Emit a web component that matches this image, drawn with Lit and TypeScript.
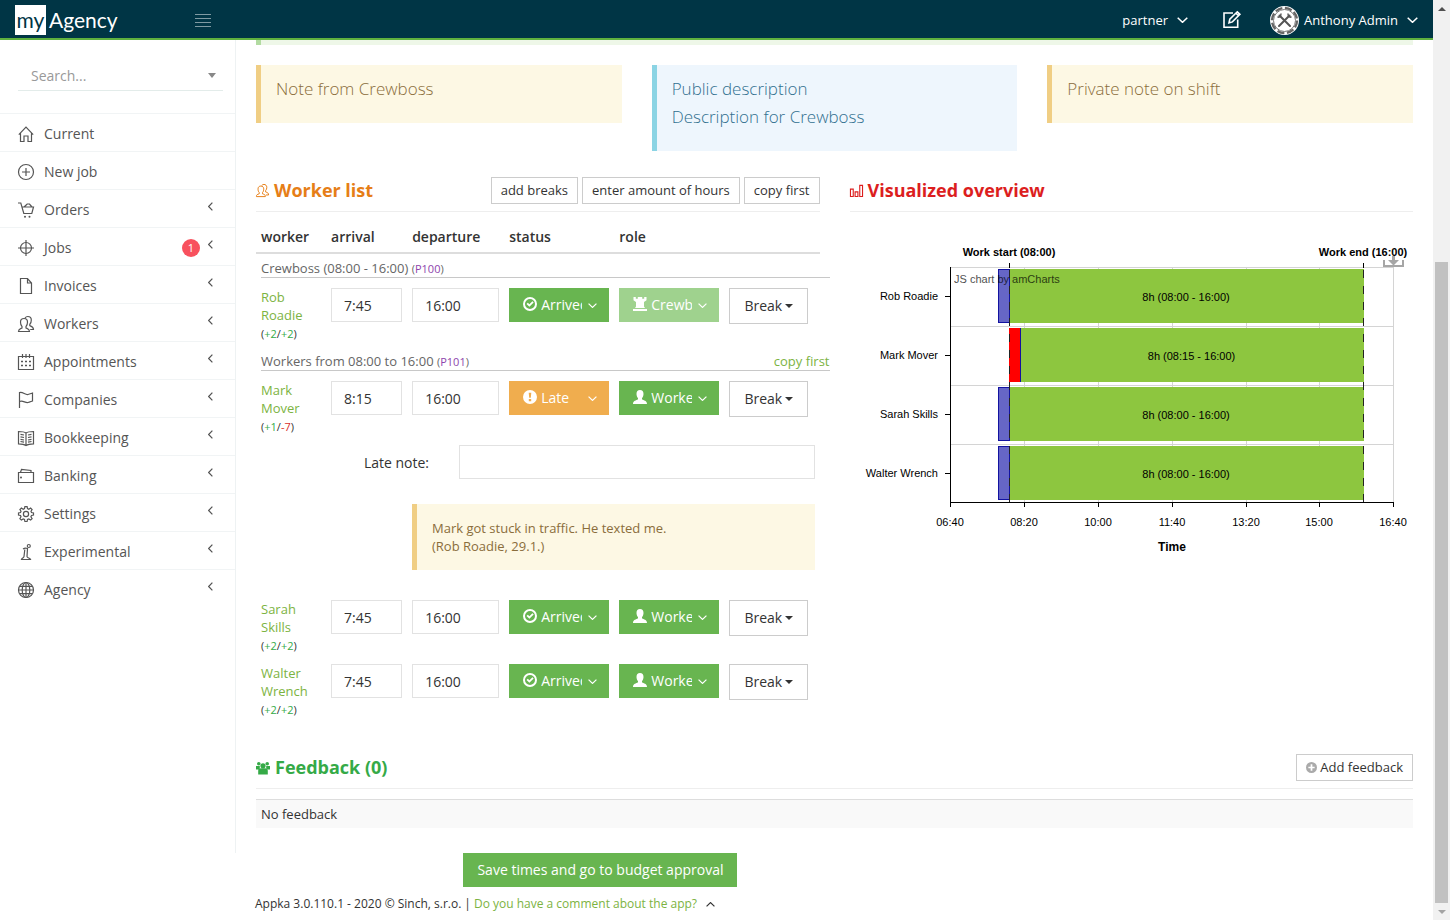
import { LitElement, html, svg, css, nothing } from "lit";
import { customElement, property } from "lit/decorators.js";
import { classMap } from "lit/directives/class-map.js";

const glyphs: Record<string, unknown> = {
  home: svg`<path d="M.8 8.6 8 1.2l7.200 7.400M2.500 7v8.500H6V10h4v5.500h3.500V7"/>`,
  plus: svg`<circle cx="8" cy="8" r="7.500"/><path d="M8 4v8M4 8h8"/>`,
  cart: svg`<path d="M0 1h2.800l3 10.500h8L15.500 5H4.200M6 5l3.200-3h2.300l2.500 3"/><circle class="dot" cx="7" cy="14.800" r="1"/><circle class="dot" cx="11.500" cy="14.800" r="1"/>`,
  target: svg`<circle cx="8" cy="8" r="5.500"/><path d="M8 0v16M0 8h16"/>`,
  file: svg`<path d="M2.500.5h7l4 4.500v10.500h-11zM9.500.5V5h4"/>`,
  people: svg`<path d="M.5 15.500c0-2.500 1-2.500 3.500-3.500v-1.500C2.800 9.500 2.500 7.500 2.500 6 2.500 3.800 4 2.500 6 2.500S9.500 3.800 9.500 6c0 1.500-.3 3.500-1.500 4.500V12c2.500 1 3.500 1 3.500 3.500zM7 2C7.700 1 8.600.5 9.800.5c2 0 3.500 1.500 3.500 3.500 0 1.500-.4 3.300-1.500 4.200v1.500c2.500 1 3.700 1.300 3.700 3.800h-3.300"/>`,
  calendar: svg`<path d="M.5 2.500h15v13H.5zM4.500 0v4M8 0v4M11.500 0v4"/><path stroke-width="1.600" stroke-dasharray="2 2" d="M3 7.500h10M3 11.500h10"/>`,
  flag: svg`<path d="M1.500 16V.5C5-.5 7 3 10 2.500c2-.5 3-1 4.500-1.500v8c-1.500.5-3 1.200-4.500 1.500C7 11 5 8 1.500 9.500"/>`,
  book: svg`<path d="M.5 1.500C3 1.500 6 1.500 8 3c2-1.500 5-1.500 7.500-1.500v12.300c-2.500 0-5.500.2-7.500 1.700-2-1.500-5-1.700-7.500-1.700zM8 3v12.500M2.500 4.300l3.500.7M2.500 6.800l3.500.7M2.500 9.300l3.500.7M2.500 11.500l3.500.7M13.500 4.300 10 5M13.500 6.800l-3.500.7M13.500 9.300l-3.500.7M13.500 11.500l-3.500.7"/>`,
  wallet: svg`<path d="M.5 4.500h15v10H.5zM2.500 4.300l1-2.800 9.500 1v2"/><circle class="dot" cx="3" cy="9.500" r="1"/>`,
  gear: svg`<circle cx="8" cy="8" r="2.600"/><path d="M6.900.6h2.200l.4 2 1.300.6 1.800-1.200 1.500 1.500L13 5.300l.5 1.300 2 .4v2.100l-2 .4-.6 1.300 1.200 1.800-1.500 1.500-1.800-1.100-1.300.5-.4 2H6.900l-.4-2-1.300-.5-1.800 1.100-1.500-1.500L3 10.800l-.5-1.300-2-.4V7l2-.4L3 5.300 1.900 3.500 3.400 2l1.800 1.200 1.300-.6z"/>`,
  info: svg`<path d="M5 5c1.500-1 3-1 4.500-.5L9 12.500c0 1.500 3 1.500 3.500 3H3.500c.5-1.500 2.300-1.500 2.500-3L6.800 5.500"/><circle cx="10.800" cy="2" r="1.500"/>`,
  globe: svg`<circle cx="8" cy="8" r="7.500"/><ellipse cx="8" cy="8" rx="3.800" ry="7.500"/><path d="M8 .5v15M.5 8h15M1.700 4.300h12.600M1.700 11.700h12.600"/>`,
  edit: svg`<path stroke-width="1.600" d="M10 2H1v14.200h13.700V8.500M6 11.800l.8-3.600L14.300.8l2.600 2.500-7.500 7.600zM13 2.300l2.500 2.500"/>`,
  chart: svg`<path d="M.5 5.500h3v8h-3zM5.500 8.500h3v5h-3zM10.500 1.500h3v12h-3z"/>`,
};

const solid: Record<string, unknown> = {
  check: svg`<path fill-rule="evenodd" d="M7 0a7 7 0 1 1 0 14A7 7 0 0 1 7 0zm0 2a5 5 0 1 0 0 10A5 5 0 0 0 7 2z"/><path d="m3.500 7 1.300-1.300 1.600 1.500 3-3 1.300 1.300-4.300 4.300z"/>`,
  alert: svg`<path fill-rule="evenodd" d="M7 0a7 7 0 1 1 0 14A7 7 0 0 1 7 0zM5.700 2.800l.5 5h1.600l.5-5zM5.800 9v2.200h2.400V9z"/>`,
  user: svg`<path d="M7 0c2.300 0 3.500 1.600 3.500 3.900 0 2-.8 3.300-1.500 4.200v1.200c1.700 1.200 5 1.400 5 4.700H0c0-3.300 3.300-3.500 5-4.700V8.100C4.300 7.200 3.500 5.900 3.500 3.900 3.500 1.600 4.700 0 7 0z"/>`,
  tower: svg`<path d="M.5 0h2.300v1.800h2V0h4.400v1.800h2V0h2.300v3.300L11 5v4.500l1 1.500H2l1-1.500V5L.5 3.300zM0 12h14v2H0z"/>`,
  group: svg`<circle cx="2.800" cy="2.800" r="1.800"/><circle cx="11.200" cy="2.800" r="1.800"/><circle cx="7" cy="4.800" r="2.600"/><path d="M0 8.500V5h3.800v2.300C3 8 2.700 8.500 2.700 8.500zM14 8.500V5h-3.800v2.300c.8.700 1.100 1.200 1.100 1.200zM2.200 13.500V9.800C2.200 8 3.500 7.300 5 7.300h4c1.500 0 2.800.7 2.800 2.500v3.700z"/>`,
  add: svg`<path fill-rule="evenodd" d="M7 0a7 7 0 1 1 0 14A7 7 0 0 1 7 0zM5.900 3v2.900H3v2.200h2.900V11h2.200V8.100H11V5.900H8.100V3z"/>`,
};

const line = (name: string, size = 16, box = 16) =>
  html`<svg class="line" width=${size} height=${size} viewBox="0 0 ${box} ${box}" aria-hidden="true">${glyphs[name]}</svg>`;
const fill = (name: string, size = 14) =>
  html`<svg class="fill" width=${size} height=${size} viewBox="0 0 14 14" aria-hidden="true">${solid[name]}</svg>`;
const chevron = (w = 11, h = 6) =>
  html`<svg class="chev" width=${w} height=${h} viewBox="0 0 11 6" aria-hidden="true"><path d="M.7.700 5.500 5.300 10.300.7"/></svg>`;

interface Bar { name: string; from: number; to: number; label: string; }

@customElement("shift-chart")
export class ShiftChart extends LitElement {
  @property({ attribute: false }) bars: Bar[] = [
    { name: "Rob Roadie", from: 465, to: 960, label: "8h (08:00 - 16:00)" },
    { name: "Mark Mover", from: 495, to: 960, label: "8h (08:15 - 16:00)" },
    { name: "Sarah Skills", from: 465, to: 960, label: "8h (08:00 - 16:00)" },
    { name: "Walter Wrench", from: 465, to: 960, label: "8h (08:00 - 16:00)" },
  ];

  static styles = css`
    :host { display: block; }
    svg { display: block; width: 100%; height: 350px; overflow: visible; font: 11px "Liberation Sans", Arial, sans-serif; }
    .crisp { shape-rendering: crispEdges; }
    .grid { stroke: #d4d4d4; fill: none; }
    .axis { stroke: #000; fill: none; }
    .work { fill: #8dc63f; }
    .early { fill: #6666c6; stroke: #1212a0; }
    .late { fill: #f00; }
    .edge { stroke: #1212a0; }
    .guide { stroke: #222; stroke-dasharray: 8 8; stroke-dashoffset: 9; }
    .mid { text-anchor: middle; }
    .end { text-anchor: end; }
    .bold { font-weight: bold; }
    .time { font-size: 12px; }
    .credit { opacity: 0.7; }
    .save { fill: #a6a6a6; }
  `;

  private x(minute: number) {
    return 100 + Math.round(((minute - 400) * 4433) / 6000);
  }

  render() {
    const hours = [400, 500, 600, 700, 800, 900, 1000];
    const start = this.x(480);
    const end = this.x(960);
    const clock = (m: number) => `${String(Math.floor(m / 60)).padStart(2, "0")}:${String(m % 60).padStart(2, "0")}`;
    return html`<svg role="img" aria-label="Visualized overview of working hours">
      <g class="crisp">
        ${hours.map((m) => svg`<path class="grid" d="M${this.x(m) + 0.5} 55.500V290"/>`)}
        ${this.bars.map((_, i) => svg`<path class="grid" d="M100 ${55.5 + i * 59}H544"/>`)}
        ${this.bars.map((b, i) => {
          const top = 57 + i * 59;
          const from = this.x(b.from);
          return svg`
            <rect class="work" x=${Math.max(from, start)} y=${top} width=${end - Math.max(from, start)} height="54"/>
            ${b.from < 480
              ? svg`<rect class="early" x=${from + 0.5} y=${top + 0.5} width=${start - from} height="53"/>`
              : svg`<rect class="late" x=${start} y=${top} width=${from - start} height="54"/><path class="edge" d="M${from + 0.5} ${top}v54"/>`}`;
        })}
        <path class="guide" d="M${start + 0.5} 51v240M${end - 0.5} 51v240"/>
        <path class="axis" d="M${start + 0.5} 51v5M${end - 0.5} 51v5M100.500 55V290.500H544"/>
        ${hours.map((m) => svg`<path class="axis" d="M${this.x(m) + 0.5} 290v5"/>`)}
        ${this.bars.map((_, i) => svg`<path class="axis" d="M95 ${84.5 + i * 59}h5"/>`)}
      </g>
      ${this.bars.map((b, i) => svg`
        <text class="end" x="88" y=${88 + i * 59}>${b.name}</text>
        <text class="mid" x=${(Math.max(this.x(b.from), start) + end - 1) / 2} y=${89 + i * 59}>${b.label}</text>`)}
      ${hours.map((m) => svg`<text class="mid" x=${this.x(m)} y="314">${clock(m)}</text>`)}
      <text class="credit" x="104" y="71">JS chart by amCharts</text>
      <text class="mid bold" x=${start} y="44">Work start (08:00)</text>
      <text class="mid bold" x=${end - 1} y="44">Work end (16:00)</text>
      <text class="mid bold time" x=${this.x(700)} y="339">Time</text>
      <path class="save" d="M533 48h2v5h17v-5h2v7h-21zM542 44h3v4h4l-5.500 5.500L538 48h4z"/>
    </svg>`;
  }
}

interface Item { icon: string; label: string; more?: boolean; badge?: number; }
interface Worker { first: string; last: string; a: number; b: number; arrival: string; departure: string; late?: boolean; boss?: boolean; }

const menu: Item[] = [
  { icon: "home", label: "Current" },
  { icon: "plus", label: "New job" },
  { icon: "cart", label: "Orders", more: true },
  { icon: "target", label: "Jobs", more: true, badge: 1 },
  { icon: "file", label: "Invoices", more: true },
  { icon: "people", label: "Workers", more: true },
  { icon: "calendar", label: "Appointments", more: true },
  { icon: "flag", label: "Companies", more: true },
  { icon: "book", label: "Bookkeeping", more: true },
  { icon: "wallet", label: "Banking", more: true },
  { icon: "gear", label: "Settings", more: true },
  { icon: "info", label: "Experimental", more: true },
  { icon: "globe", label: "Agency", more: true },
];

@customElement("app-root")
export class AppRoot extends LitElement {
  static styles = css`
    :host { display: block; font: 13px/18px "Open Sans", "Noto Sans", sans-serif; color: #333; background: #fff; }
    * { box-sizing: border-box; }
    a { color: #7cb342; text-decoration: none; }
    button, input, select { font: inherit; color: inherit; margin: 0; border-radius: 0; }
    svg { display: block; flex: none; }
    .line { fill: none; stroke: currentColor; stroke-width: 1.2; overflow: visible; }
    .line .dot { fill: currentColor; stroke: none; }
    .fill { fill: currentColor; }
    .chev { fill: none; stroke: currentColor; stroke-width: 1.5; }
    .page { display: flex; min-height: 100vh; }
    .app { flex: 1; min-width: 0; }

    .top { display: flex; align-items: center; height: 40px; padding: 2px 15px 0; background: #003545; border-bottom: 2px solid #5fb13f; color: #fff; }
    .logo { display: flex; align-items: center; color: #fff; font: 21px/30px Lato, sans-serif; }
    .my { width: 31px; text-align: center; background: #fff; color: #003545; margin-right: 3px; }
    .burger { display: grid; gap: 3px; width: 16px; margin-left: 77px; padding: 0; border: 0; background: none; }
    .burger i { height: 1px; background: #7f9aa2; }
    .account { display: flex; align-items: center; margin-left: auto; }
    .drop { display: flex; align-items: center; gap: 9px; padding: 0; border: 0; background: none; color: #fff; }
    .pen { margin: 0 29px 0 35px; padding: 0; border: 0; background: none; color: #fff; }
    .avatar { margin-right: 5px; }

    .body { display: grid; grid-template-columns: 236px minmax(0, 1fr); }
    .side { border-right: 1px solid #eef2f3; }
    .search { display: flex; align-items: center; justify-content: space-between; height: 36px; margin: 15px 12px 22px 18px; padding: 6px 7px 0 13px; border-bottom: 1px solid #e3ecea; }
    .search input { width: 140px; border: 0; padding: 0; outline: 0; font-size: 14px; line-height: 20px; background: none; color: #999; }
    .search input::placeholder { color: #999; opacity: 1; }
    .tri { border: 4px solid transparent; border-top: 5px solid #888; border-bottom: 0; }
    .nav { list-style: none; margin: 0; padding: 0; }
    .nav a { display: flex; align-items: center; gap: 10px; height: 38px; padding: 2px 20px 0 18px; border-top: 1px solid #f1f4f5; font-size: 14px; color: #555; }
    .nav .label { flex: 1; }
    .nav .chev { transform: rotate(90deg); margin-bottom: 6px; }
    .badge { width: 18px; height: 18px; margin-right: -4px; border-radius: 9px; background: #f8515e; color: #fff; font-size: 11px; text-align: center; }

    .main { padding: 0 20px 25px; }
    .strip { height: 5px; background: #eef7e8; border-left: 5px solid #b2dba1; margin-bottom: 20px; }
    .notes { display: grid; grid-template-columns: repeat(3, minmax(0, 1fr)); gap: 30px; align-items: start; margin-bottom: 26px; }
    .note { padding: 10px 15px 20px; border-left: 5px solid #f0ce84; background: #fdf8e4; color: #8a6d3b; font-size: 17px; line-height: 28px; font-weight: 300; }
    .note.blue { border-color: #8bd4e4; background: #eef6fd; color: #31708f; }
    .cols { display: grid; grid-template-columns: repeat(2, minmax(0, 1fr)); gap: 30px; margin-bottom: 26px; }
    .head { display: flex; align-items: center; gap: 4px; height: 35px; padding-bottom: 7px; border-bottom: 1px solid #eee; }
    .head h2 { display: flex; align-items: center; gap: 5px; margin: 0 auto 0 0; padding-bottom: 2px; font-size: 18px; line-height: 24px; font-weight: 700; }
    .head h2 svg { margin-top: 2px; }
    .orange { color: #e67e17; }
    .red { color: #dc1e1e; }
    .green { color: #35aa47; }
    .small { display: flex; align-items: center; gap: 3px; height: 27px; padding: 0 9px 2px; border: 1px solid #ccc; background: #fff; white-space: nowrap; }
    .small .fill { color: #aaa; margin-top: 2px; }

    table, thead, tbody { display: block; }
    th, td { padding: 0; text-align: left; }
    .row { display: grid; grid-template-columns: minmax(0, 60fr) minmax(0, 71fr) minmax(0, 87fr) repeat(3, minmax(0, 100fr)); column-gap: 10px; }
    .list { margin-right: -10px; }
    .list thead { margin: 0 10px 5px 0; padding: 15px 0 5px 5px; border-bottom: 2px solid #ddd; }
    .list thead .row { margin-right: -10px; }
    .list th { font-size: 14px; line-height: 20px; font-weight: 600; }
    .list tbody { padding-left: 5px; }
    .group { display: block; margin-bottom: 10px; border-bottom: 1px solid #c8c8c8; color: #666; }
    .list .group th { display: flex; justify-content: space-between; font-size: 13px; line-height: 18px; font-weight: 400; }
    small { font-size: 11px; line-height: 1; }
    .purple { color: #8e44ad; }
    .worker { margin-bottom: 10px; height: 54px; }
    .minus { color: #d9302c; }
    .field { width: 100%; height: 34px; padding: 0 12px; border: 1px solid #e2e2e2; background: #fff; font-size: 14px; }
    .picker { display: grid; align-items: center; background: #68b550; color: #fff; height: 34px; }
    .picker > * { grid-area: 1 / 1; }
    .picker .fill { margin-left: 14px; margin-bottom: 2px; pointer-events: none; }
    .picker .chev { justify-self: end; margin-right: 12px; pointer-events: none; }
    .picker select { appearance: none; width: 100%; height: 34px; padding: 0 27px 0 32px; border: 0; background: none; color: #fff; font-size: 14px; }
    .picker option { color: #333; }
    .picker.amber { background: #f0ad4e; }
    .picker.pale { background: #9fd28e; }
    .break { display: flex; align-items: center; gap: 3px; height: 36px; padding: 0 14px; border: 1px solid #ccc; background: #fff; font-size: 14px; }
    .break .tri { border-top-color: #333; border-top-width: 4px; }
    .extra { display: block; padding-right: 15px; }
    .extra td { display: block; }
    .late { display: grid; grid-template-columns: 168px 1fr; column-gap: 30px; align-items: center; margin-bottom: 25px; font-size: 14px; }
    .late label { text-align: right; padding-top: 2px; }
    .remark { margin: 0 0 30px 151px; padding: 15px; border-left: 5px solid #f0ce84; background: #fdf8e4; color: #8a6d3b; }

    .empty { margin-top: 10px; padding: 5px; border-top: 1px solid #ddd; background: #f9f9f9; }
    .foot { padding: 0 20px 0 255px; }
    .save { display: block; height: 34px; margin-left: 18%; padding: 0 14px; border: 0; background: #68b550; color: #fff; font-size: 14px; }
    .legal { display: flex; align-items: center; gap: 3px; margin-top: 8px; font-size: 12px; }
    .legal .chev { margin-left: 6px; transform: rotate(180deg); }

    .scroll { display: flex; flex-direction: column; width: 17px; background: #f1f1f1; }
    .cap { display: grid; place-items: center; height: 17px; }
    .cap i { border: 4px solid transparent; border-top: 0; border-bottom-color: #505050; }
    .cap.down i { border-top: 4px solid #a3a3a3; border-bottom: 0; }
    .gap { flex: 245; }
    .thumb { flex: 641; margin: 0 2px; background: #c1c1c1; }
  `;

  private diff(n: number) {
    return html`<span class=${n < 0 ? "minus" : "green"}>${n < 0 ? n : `+${n}`}</span>`;
  }

  private picker(icon: string, value: string, label: string, tone = "") {
    return html`<div class=${classMap({ picker: true, [tone || "base"]: true })}>
      <select aria-label=${label}><option>${value}</option></select>${fill(icon)}${chevron(9, 5)}
    </div>`;
  }

  private worker(w: Worker) {
    const who = `${w.first} ${w.last}`;
    return html`<tr class="row worker">
      <td><a href="#">${w.first} ${w.last}</a><br /><small>(${this.diff(w.a)}/${this.diff(w.b)})</small></td>
      <td><input class="field" aria-label="Arrival of ${who}" .value=${w.arrival} /></td>
      <td><input class="field" aria-label="Departure of ${who}" .value=${w.departure} /></td>
      <td>${w.late ? this.picker("alert", "Late", `Status of ${who}`, "amber") : this.picker("check", "Arrived", `Status of ${who}`)}</td>
      <td>${w.boss ? this.picker("tower", "Crewboss", `Role of ${who}`, "pale") : this.picker("user", "Worker", `Role of ${who}`)}</td>
      <td><button class="break" type="button">Break<i class="tri"></i></button></td>
    </tr>`;
  }

  render() {
    return html`<div class="page">
      <div class="app">
        <header class="top">
          <a class="logo" href="#"><span class="my">my</span><span>Agency</span></a>
          <button class="burger" type="button" aria-label="Toggle menu"><i></i><i></i><i></i><i></i></button>
          <div class="account">
            <button class="drop" type="button">partner ${chevron()}</button>
            <button class="pen" type="button" aria-label="Write">${line("edit", 18, 18)}</button>
            <svg class="avatar" width="29" height="29" viewBox="0 0 29 29" aria-hidden="true">
              <circle cx="14.500" cy="14.500" r="14.500" fill="#fff" />
              <circle cx="14.500" cy="14.500" r="12.500" fill="none" stroke="#666" stroke-width="2.400" stroke-dasharray="7.200 2.620" />
              <circle cx="14.500" cy="14.500" r="11" fill="#fff" stroke="#777" stroke-width="1" />
              <path d="m9.500 9.500 10.500 10.500M19.500 9.500 9 20" stroke="#555" stroke-width="2" stroke-linecap="round" />
              <path d="M7.500 10.800c2.200 1 4-.6 3.300-3.300M21.500 10.800c-2.200 1-4-.6-3.300-3.300" fill="none" stroke="#555" stroke-width="1.500" />
            </svg>
            <button class="drop" type="button">Anthony Admin ${chevron()}</button>
          </div>
        </header>
        <div class="body">
          <aside class="side">
            <div class="search"><input type="text" placeholder="Search..." aria-label="Search" /><i class="tri"></i></div>
            <ul class="nav">
              ${menu.map((m) => html`<li><a href="#">${line(m.icon)}<span class="label">${m.label}</span>
                ${m.badge ? html`<span class="badge">${m.badge}</span>` : nothing}
                ${m.more ? chevron(9, 5) : nothing}</a></li>`)}
            </ul>
          </aside>
          <main class="main">
            <div class="strip"></div>
            <div class="notes">
              <div class="note">Note from Crewboss</div>
              <div class="note blue">Public description<br />Description for Crewboss</div>
              <div class="note">Private note on shift</div>
            </div>
            <div class="cols">
              <section>
                <div class="head">
                  <h2 class="orange">${line("people", 13)}Worker list</h2>
                  <button class="small" type="button">add breaks</button>
                  <button class="small" type="button">enter amount of hours</button>
                  <button class="small" type="button">copy first</button>
                </div>
                <table class="list">
                  <thead><tr class="row"><th>worker</th><th>arrival</th><th>departure</th><th>status</th><th>role</th></tr></thead>
                  <tbody>
                    <tr class="group"><th><span>Crewboss (08:00 - 16:00) <small>(<span class="purple">P100</span>)</small></span></th></tr>
                    ${this.worker({ first: "Rob", last: "Roadie", a: 2, b: 2, arrival: "7:45", departure: "16:00", boss: true })}
                    <tr class="group"><th><span>Workers from 08:00 to 16:00 <small>(<span class="purple">P101</span>)</small></span><a href="#">copy first</a></th></tr>
                    ${this.worker({ first: "Mark", last: "Mover", a: 1, b: -7, arrival: "8:15", departure: "16:00", late: true })}
                    <tr class="extra"><td>
                      <div class="late"><label for="late">Late note:</label><input class="field" id="late" /></div>
                      <div class="remark">Mark got stuck in traffic. He texted me.<br />(Rob Roadie, 29.1.)</div>
                    </td></tr>
                    ${this.worker({ first: "Sarah", last: "Skills", a: 2, b: 2, arrival: "7:45", departure: "16:00" })}
                    ${this.worker({ first: "Walter", last: "Wrench", a: 2, b: 2, arrival: "7:45", departure: "16:00" })}
                  </tbody>
                </table>
              </section>
              <section>
                <div class="head"><h2 class="red">${line("chart", 13, 14)}Visualized overview</h2></div>
                <shift-chart></shift-chart>
              </section>
            </div>
            <section>
              <div class="head">
                <h2 class="green">${fill("group")}Feedback (0)</h2>
                <button class="small" type="button">${fill("add", 11)}Add feedback</button>
              </div>
              <div class="empty">No feedback</div>
            </section>
          </main>
        </div>
        <footer class="foot">
          <button class="save" type="button">Save times and go to budget approval</button>
          <div class="legal"><span>Appka 3.0.110.1 - 2020 © Sinch, s.r.o.</span><span>|</span><a href="#">Do you have a comment about the app?</a>${chevron(9, 5)}</div>
        </footer>
      </div>
      <div class="scroll" aria-hidden="true">
        <div class="cap"><i></i></div><div class="gap"></div><div class="thumb"></div><div class="cap down"><i></i></div>
      </div>
    </div>`;
  }
}
